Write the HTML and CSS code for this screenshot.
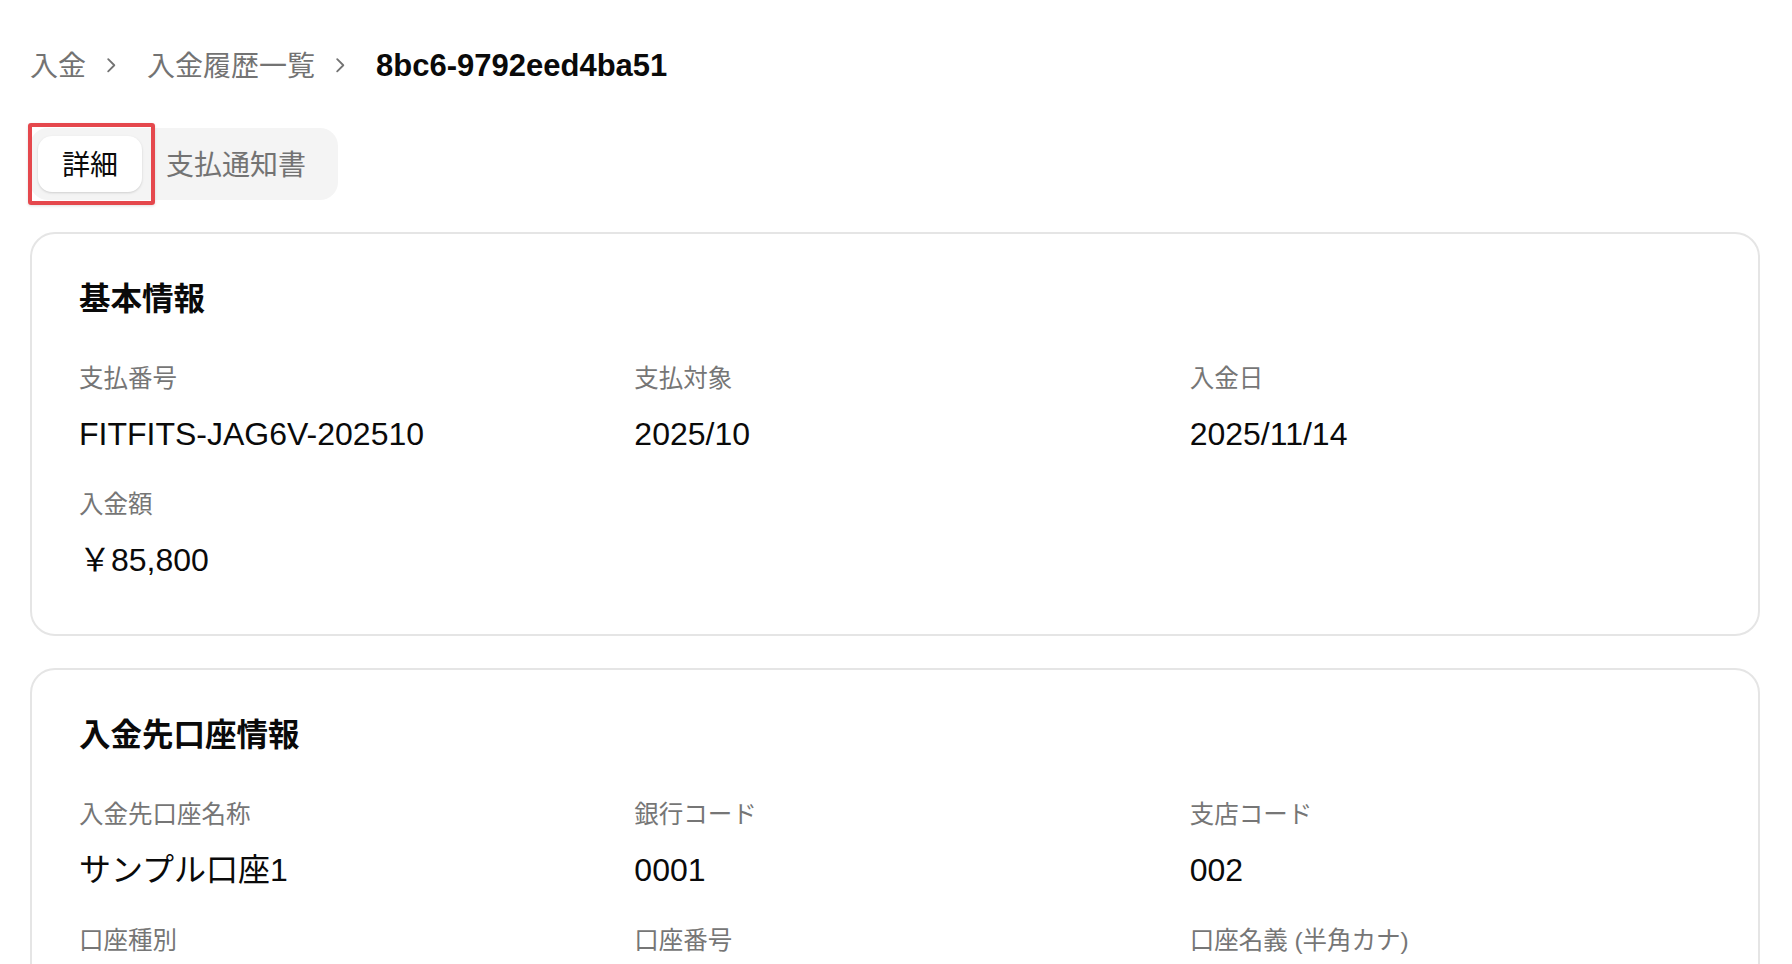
FILE: index.html
```html
<!DOCTYPE html>
<html lang="ja">
<head>
<meta charset="utf-8">
<title>入金詳細</title>
<link rel="stylesheet" href="styles.css">
</head>
<body>
<div class="page">
  <nav class="crumbs">
    <span class="crumb">入金</span>
    <svg class="crumb-sep" viewBox="0 0 24 24"><path d="m9 18 6-6-6-6"/></svg>
    <span class="crumb">入金履歴一覧</span>
    <svg class="crumb-sep" viewBox="0 0 24 24"><path d="m9 18 6-6-6-6"/></svg>
    <span class="crumb crumb-current">8bc6-9792eed4ba51</span>
  </nav>

  <div class="tabs-row">
    <div class="tabs">
      <div class="tab active">詳細<span class="highlight"></span></div>
      <div class="tab">支払通知書</div>
    </div>
  </div>

  <div class="cards">
    <section class="card">
      <h2 class="card-title">基本情報</h2>
      <div class="fields">
        <div class="field"><div class="label">支払番号</div><div class="value">FITFITS-JAG6V-202510</div></div>
        <div class="field"><div class="label">支払対象</div><div class="value">2025/10</div></div>
        <div class="field"><div class="label">入金日</div><div class="value">2025/11/14</div></div>
        <div class="field"><div class="label">入金額</div><div class="value">￥85,800</div></div>
      </div>
    </section>

    <section class="card">
      <h2 class="card-title">入金先口座情報</h2>
      <div class="fields">
        <div class="field"><div class="label">入金先口座名称</div><div class="value">サンプル口座1</div></div>
        <div class="field"><div class="label">銀行コード</div><div class="value">0001</div></div>
        <div class="field"><div class="label">支店コード</div><div class="value">002</div></div>
        <div class="field"><div class="label">口座種別</div></div>
        <div class="field"><div class="label">口座番号</div></div>
        <div class="field"><div class="label">口座名義 (半角カナ)</div></div>
      </div>
    </section>
  </div>
</div>
</body>
</html>
```

FILE: styles.css
```css
* {
  box-sizing: border-box;
  margin: 0;
  padding: 0;
}

html, body {
  height: 100%;
  overflow: hidden;
}

body {
  font-family: "Liberation Sans", "Noto Sans CJK JP", sans-serif;
  color: #0a0a0a;
  background: #ffffff;
}

.page {
  padding: 44.5px 32px 0 30px;
}

.crumbs {
  display: flex;
  align-items: baseline;
  height: 42px;
  font-size: 28px;
  line-height: 42px;
  color: #737373;
}

.crumb-sep {
  flex: none;
  align-self: center;
  width: 24.5px;
  height: 24.5px;
  margin: 0 23.5px 0 13px;
  fill: none;
  stroke: #737373;
  stroke-width: 1.8;
  stroke-linecap: round;
  stroke-linejoin: round;
}

.crumb-current {
  font-size: 31px;
  font-weight: 700;
  color: #0a0a0a;
}

.tabs-row {
  display: flex;
  margin-top: 41.5px;
}

.tabs {
  display: inline-flex;
  padding: 8px;
  background: #f4f4f4;
  border-radius: 18px;
}

.tab {
  position: relative;
  display: flex;
  align-items: center;
  height: 56px;
  padding: 0 24px 3px;
  font-size: 28px;
  color: #737373;
  border-radius: 14px;
}

.tab.active {
  background: #ffffff;
  color: #0a0a0a;
  box-shadow: 0 1px 3px rgba(0, 0, 0, 0.1), 0 1px 2px rgba(0, 0, 0, 0.06);
}

.highlight {
  position: absolute;
  top: -13px;
  bottom: -13px;
  left: -10px;
  right: -13px;
  border: 4px solid #e5484d;
  border-radius: 3px;
  box-shadow: 0 1px 3px rgba(0, 0, 0, 0.12);
}

.cards {
  display: flex;
  flex-direction: column;
  gap: 32px;
  margin-top: 32px;
}

.card {
  border: 2px solid #e5e5e5;
  border-radius: 25px;
  padding: 41px 47px 49px;
  background: #ffffff;
}

.card-title {
  font-size: 31.5px;
  font-weight: 700;
  line-height: 49px;
  margin-bottom: 37px;
}

.fields {
  display: grid;
  grid-template-columns: repeat(3, 1fr);
  column-gap: 34px;
  row-gap: 28px;
}

.label {
  font-size: 24.5px;
  line-height: 35px;
  color: #767676;
}

.value {
  font-size: 32px;
  line-height: 49px;
  margin-top: 14px;
}
```
